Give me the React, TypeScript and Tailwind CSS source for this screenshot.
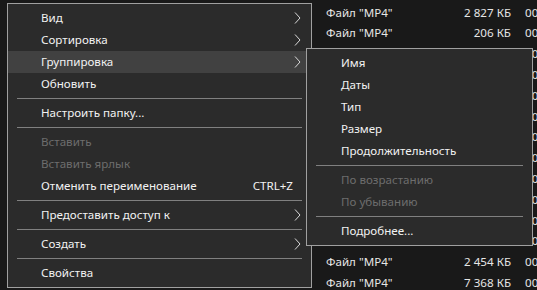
import React from "react";

type Item =
  | { sep: true }
  | { label: string; sub?: boolean; disabled?: boolean; active?: boolean; shortcut?: string };

const mainItems: Item[] = [
  { label: "Вид", sub: true },
  { label: "Сортировка", sub: true },
  { label: "Группировка", sub: true, active: true },
  { label: "Обновить" },
  { sep: true },
  { label: "Настроить папку..." },
  { sep: true },
  { label: "Вставить", disabled: true },
  { label: "Вставить ярлык", disabled: true },
  { label: "Отменить переименование", shortcut: "CTRL+Z" },
  { sep: true },
  { label: "Предоставить доступ к", sub: true },
  { sep: true },
  { label: "Создать", sub: true },
  { sep: true },
  { label: "Свойства" },
];

const subItems: Item[] = [
  { label: "Имя" },
  { label: "Даты" },
  { label: "Тип" },
  { label: "Размер" },
  { label: "Продолжительность" },
  { sep: true },
  { label: "По возрастанию", disabled: true },
  { label: "По убыванию", disabled: true },
  { sep: true },
  { label: "Подробнее..." },
];

// rows of the file list; those hidden under the menus only show the tail of the last column
const rows: (string | null)[] = [
  "2 827 КБ",
  "206 КБ",
  null,
  null,
  null,
  null,
  null,
  null,
  null,
  null,
  null,
  null,
  "2 454 КБ",
  "7 368 КБ",
];

const Chevron = () => (
  <svg width="7" height="12" viewBox="0 0 7 12" className="shrink-0">
    <polyline points="1,0.5 6,6 1,11.5" fill="none" stroke="#d8d8d8" strokeWidth="1" />
  </svg>
);

const Menu = ({ items, textPad }: { items: Item[]; textPad: string }) => (
  <div className="flex flex-col py-[3px]">
    {items.map((it, i) =>
      "sep" in it ? (
        <div key={i} className="h-[7px] flex items-center px-[9px]">
          <div className="h-px w-full bg-[#808080]" />
        </div>
      ) : (
        <div
          key={i}
          className={`h-[22px] flex items-center pr-[10px] ${textPad} ${
            it.active ? "bg-[#414141]" : ""
          } ${it.disabled ? "text-[#6d6d6d]" : "text-[#f2f2f2]"}`}
        >
          <span className="flex-1 whitespace-nowrap">{it.label}</span>
          {it.shortcut && <span className="mr-[8px]">{it.shortcut}</span>}
          {it.sub && <Chevron />}
        </div>
      )
    )}
  </div>
);

export default function App() {
  return (
    <div
      className="relative w-[537px] h-[290px] overflow-hidden bg-[#191919] text-[11.6px] leading-none"
      style={{ fontFamily: '"Noto Sans", "Open Sans", sans-serif' }}
    >
      {/* file list underneath */}
      <div className="flex flex-col pt-[2px] pl-[326px] text-[#e6e6e6]">
        {rows.map((s, i) => (
          <div key={i} className="h-[20.8px] flex items-center whitespace-nowrap">
            <span className="w-[110px] shrink-0">{s ? 'Файл "MP4"' : ""}</span>
            <span className="w-[75px] shrink-0 text-right">{s ?? ""}</span>
            <span className="ml-[14px] shrink-0">00:00:12</span>
          </div>
        ))}
      </div>

      {/* main context menu */}
      <div className="absolute left-[7px] top-[3px] w-[305px] bg-[#2b2b2b] border border-[#a0a0a0]">
        <Menu items={mainItems} textPad="pl-[33px]" />
      </div>

      {/* submenu */}
      <div className="absolute left-[306px] top-[48px] w-[227px] bg-[#2b2b2b] border border-[#a0a0a0]">
        <Menu items={subItems} textPad="pl-[34px]" />
      </div>
    </div>
  );
}
